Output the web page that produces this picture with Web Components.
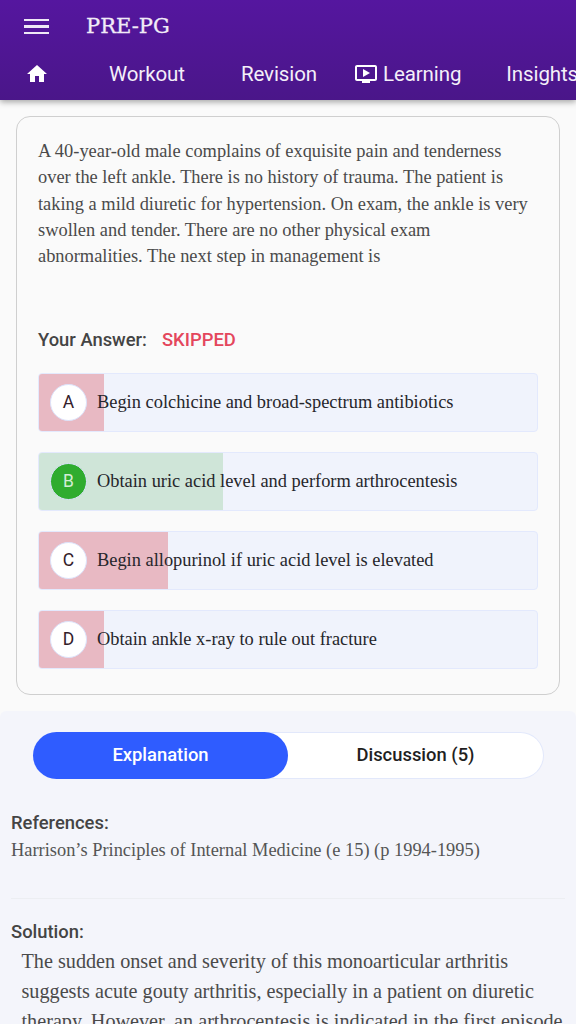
<!DOCTYPE html>
<html>
<head>
<meta charset="utf-8">
<style>
  html, body { margin: 0; padding: 0; background: #fafafa; }
  body { width: 576px; height: 1024px; overflow: hidden; font-family: Roboto, sans-serif; }
</style>
</head>
<body>
<app-header></app-header>
<question-card>
  <option-row letter="A" fill="65" text="Begin colchicine and broad-spectrum antibiotics"></option-row>
  <option-row letter="B" fill="184" correct text="Obtain uric acid level and perform arthrocentesis"></option-row>
  <option-row letter="C" fill="129" text="Begin allopurinol if uric acid level is elevated"></option-row>
  <option-row letter="D" fill="65" text="Obtain ankle x-ray to rule out fracture"></option-row>
</question-card>
<answer-panel></answer-panel>

<script>
// top bar with the title row and the tabs
class AppHeader extends HTMLElement {
  constructor() {
    super();
    this.attachShadow({ mode: 'open' });
    this.shadowRoot.innerHTML = `
      <style>
        :host {
          display: block;
          height: 100px;
          background: linear-gradient(#55169f, #4a1689);
          box-shadow: 0 2px 6px rgba(0, 0, 0, 0.35);
          color: #fff;
          overflow: hidden;
          position: relative;
        }
        .top { display: flex; align-items: center; height: 52px; padding-left: 24px; }
        .burger { width: 25px; height: 16px; margin-top: 1px; display: flex; flex-direction: column; justify-content: space-between; }
        .burger i { display: block; height: 2.4px; background: #efe8f6; }
        .title { margin-left: 37px; font-family: "DejaVu Serif", serif; font-size: 21px; line-height: 26px; letter-spacing: 0; -webkit-text-stroke: 0.3px #f1ebf7; color: #f1ebf7; }
        .tabs { display: flex; align-items: center; height: 44px; white-space: nowrap; font-size: 20.5px; letter-spacing: -0.1px; }
        .tabs span { display: block; color: #f4eff9; }
        .home { margin-left: 25px; width: 24px; height: 24px; flex: none; }
        .workout { margin-left: 60px; }
        .revision { margin-left: 56px; }
        .tv { margin-left: 37px; width: 24px; height: 24px; flex: none; }
        .learning { margin-left: 5px; }
        .insights { margin-left: 45px; }
      </style>
      <div class="top">
        <div class="burger"><i></i><i></i><i></i></div>
        <div class="title">PRE-PG</div>
      </div>
      <div class="tabs">
        <svg class="home" viewBox="0 0 24 24" fill="#fff"><path d="M10 20v-6h4v6h5v-8h3L12 3 2 12h3v8z"/></svg>
        <span class="workout">Workout</span>
        <span class="revision">Revision</span>
        <svg class="tv" viewBox="0 0 24 24" fill="#fff"><path d="M21 3H3c-1.1 0-2 .9-2 2v12c0 1.1.9 2 2 2h5v2h8v-2h5c1.1 0 2-.9 2-2V5c0-1.1-.9-2-2-2zm0 14H3V5h18v12zM16 11l-7 4V7z"/></svg>
        <span class="learning">Learning</span>
        <span class="insights">Insights</span>
      </div>
    `;
  }
}

// one answer choice, fill is the width of the percentage bar in px
class OptionRow extends HTMLElement {
  constructor() {
    super();
    this.attachShadow({ mode: 'open' });
  }

  connectedCallback() {
    const letter = this.getAttribute('letter');
    const fill = this.getAttribute('fill');
    const text = this.getAttribute('text');
    const correct = this.hasAttribute('correct');
    this.shadowRoot.innerHTML = `
      <style>
        :host {
          display: block;
          height: 57.5px;
          box-sizing: content-box;
          border: 1px solid #e3e9fd;
          border-radius: 4px;
          background: #f0f3fc;
          position: relative;
          overflow: hidden;
        }
        .bar { position: absolute; left: 0; top: 0; bottom: 0; width: ${fill}px; background: ${correct ? '#cfe5d8' : '#e8b9c3'}; }
        .row { position: relative; display: flex; align-items: center; height: 100%; padding-left: 11px; }
        .letter {
          width: 35px; height: 35px; border-radius: 50%;
          border: 1px solid #dce3fb;
          background: ${correct ? '#2fac2f' : '#fff'};
          color: ${correct ? '#d3ecd5' : '#33202a'};
          display: flex; align-items: center; justify-content: center;
          font-size: 17.5px;
          flex: none;
        }
        .text { margin-left: 10px; font: 18.4px "Liberation Serif", serif; color: #26262b; white-space: nowrap; }
      </style>
      <div class="bar"></div>
      <div class="row">
        <div class="letter">${letter}</div>
        <div class="text">${text}</div>
      </div>
    `;
  }
}

// card with the stem, the answer line and the slotted options
class QuestionCard extends HTMLElement {
  constructor() {
    super();
    this.attachShadow({ mode: 'open' });
    this.shadowRoot.innerHTML = `
      <style>
        :host {
          display: block;
          box-sizing: border-box;
          width: 544px;
          height: 579px;
          margin: 16px 16px 0;
          padding: 21px 21px 0;
          border: 1px solid #cfcfcf;
          border-radius: 14px;
          background: #fafafa;
        }
        .stem { font: 18.4px/26.3px "Liberation Serif", serif; color: #4a4a4a; height: 132px; }
        .answer { display: flex; margin-top: 57px; height: 24px; align-items: center; font-size: 18.4px; font-weight: 500; color: #444; }
        .answer b { font-weight: 500; color: #e4465c; margin-left: 15px; }
        .options { display: flex; flex-direction: column; gap: 19.5px; margin-top: 21.5px; }
      </style>
      <div class="stem">A 40-year-old male complains of exquisite pain and tenderness over the left ankle. There is no history of trauma. The patient is taking a mild diuretic for hypertension. On exam, the ankle is very swollen and tender. There are no other physical exam abnormalities. The next step in management is</div>
      <div class="answer">Your Answer: <b>SKIPPED</b></div>
      <div class="options"><slot></slot></div>
    `;
  }
}

// lower panel with the toggle, references and solution
class AnswerPanel extends HTMLElement {
  constructor() {
    super();
    this.attachShadow({ mode: 'open' });
    this.shadowRoot.innerHTML = `
      <style>
        :host {
          display: block;
          margin-top: 16px;
          height: 292px;
          overflow: hidden;
          background: #f4f5fb;
          border-radius: 6px 6px 0 0;
          padding-top: 21px;
        }
        .toggle {
          display: flex;
          width: 511px;
          height: 47px;
          margin-left: 33px;
          background: #fff;
          border: 1px solid #e2e8fb;
          border-left: none;
          box-sizing: border-box;
          border-radius: 24px;
          font-size: 18.4px;
          font-weight: 500;
        }
        .toggle div { display: flex; align-items: center; justify-content: center; padding-bottom: 2px; box-sizing: border-box; }
        .on { width: 255px; margin: -1px 0; background: #2f5cff; color: #fff; border-radius: 24px; }
        .off { flex: 1; color: #1f1f1f; }
        .body { padding: 0 11px; }
        h4 { margin: 0; font-size: 18.4px; line-height: 24px; font-weight: 500; color: #444; }
        .refs { margin-top: 32px; }
        .ref { font: 18.4px/26px "Liberation Serif", serif; color: #555; margin-top: 2px; }
        hr { border: none; border-top: 1px solid #eceef2; margin: 35px 0 21px; }
        .sol { font: 20.2px/30px "Liberation Serif", serif; color: #4a4a4a; padding-left: 10.5px; margin-top: 2px; }
      </style>
      <div class="toggle">
        <div class="on">Explanation</div>
        <div class="off">Discussion (5)</div>
      </div>
      <div class="body">
        <div class="refs">
          <h4>References:</h4>
          <div class="ref">Harrison’s Principles of Internal Medicine (e 15) (p 1994-1995)</div>
        </div>
        <hr>
        <h4>Solution:</h4>
        <div class="sol">The sudden onset and severity of this monoarticular arthritis suggests acute gouty arthritis, especially in a patient on diuretic therapy. However, an arthrocentesis is indicated in the first episode</div>
      </div>
    `;
  }
}

customElements.define('app-header', AppHeader);
customElements.define('option-row', OptionRow);
customElements.define('question-card', QuestionCard);
customElements.define('answer-panel', AnswerPanel);
</script>
</body>
</html>
